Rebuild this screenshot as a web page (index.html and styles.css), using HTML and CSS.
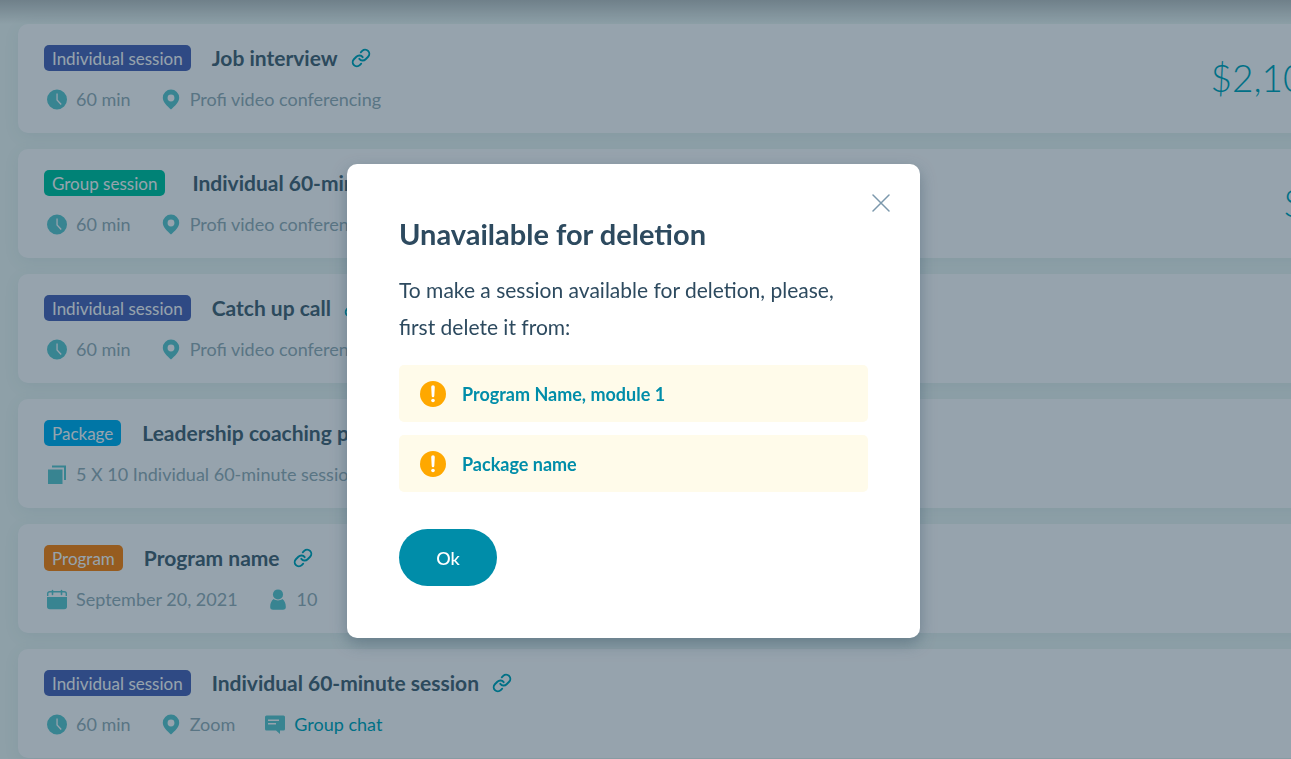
FILE: index.html
```html
<!DOCTYPE html>
<html lang="en">
<head>
    <meta charset="UTF-8">
    <meta name="viewport" content="width=device-width, initial-scale=1.0">
    <title>Services</title>
    <link rel="stylesheet" href="styles.css">
</head>
<body>
    <!-- Icon sprite -->
    <svg class="sprite" width="0" height="0" aria-hidden="true">
        <symbol id="link" viewBox="0 0 24 24">
            <g fill="none" stroke="currentColor" stroke-width="2.3" stroke-linecap="round" stroke-linejoin="round">
                <path d="M10 13a5 5 0 0 0 7.54.54l3-3a5 5 0 0 0-7.07-7.07l-1.72 1.71"/>
                <path d="M14 11a5 5 0 0 0-7.54-.54l-3 3a5 5 0 0 0 7.07 7.07l1.71-1.71"/>
            </g>
        </symbol>
        <symbol id="clock" viewBox="0 0 20 20">
            <path fill="currentColor" fill-rule="evenodd" d="M10 0a10 10 0 1 0 0 20a10 10 0 0 0 0-20zM9.4 4h1.3v6.2l4 4.2-1 1-4.3-4.7z"/>
        </symbol>
        <symbol id="pin" viewBox="0 0 20 22">
            <path fill="currentColor" fill-rule="evenodd" d="M10 .5a8.6 8.6 0 0 0-8.6 8.6c0 4.6 4.6 8.6 8.6 12.4 4-3.8 8.6-7.8 8.6-12.4A8.6 8.6 0 0 0 10 .5zM10 5.8a3.6 3.6 0 1 1 0 7.2a3.6 3.6 0 0 1 0-7.2z"/>
        </symbol>
        <symbol id="stack" viewBox="0 0 20 20">
            <path fill="currentColor" d="M1 5h14.5v14.5H1zM5 1h14v14.5h-2V3H5z"/>
        </symbol>
        <symbol id="calendar" viewBox="0 0 20 20">
            <path fill="currentColor" d="M0 7.5h20v9.5a2.8 2.8 0 0 1-2.800 2.800H2.800A2.800 2.800 0 0 1 0 17z"/>
            <path fill="none" stroke="currentColor" stroke-width="1.400" d="M.7 6.500V4.200a2 2 0 0 1 2-2h14.600a2 2 0 0 1 2 2v2.300"/>
            <path fill="none" stroke="currentColor" stroke-width="1.600" stroke-linecap="round" d="M5.500 1v4M14.500 1v4"/>
        </symbol>
        <symbol id="person" viewBox="0 0 20 22">
            <circle cx="10" cy="5.700" r="5.300" fill="currentColor"/>
            <path fill="currentColor" d="M5.500 10.500c2.600 2 6.400 2 9 0 2.300 1.500 3.700 4.500 3.700 8.300 0 2-1 2.900-3 2.900H4.800c-2 0-3-.9-3-2.900 0-3.800 1.400-6.800 3.700-8.300z"/>
        </symbol>
        <symbol id="chat" viewBox="0 0 20 20">
            <path fill="currentColor" fill-rule="evenodd" d="M1.500 1h17A1.500 1.500 0 0 1 20 2.500v12a1.500 1.500 0 0 1-1.500 1.500H15v3.500L11 16H1.500A1.500 1.500 0 0 1 0 14.500v-12A1.500 1.500 0 0 1 1.500 1zM3 5v1.400h11V5zM3 8.500v1.400h8V8.500z"/>
        </symbol>
        <symbol id="alert" viewBox="0 0 26 26">
            <circle cx="13" cy="13" r="13" fill="#ffa800"/>
            <path fill="#fff" d="M11.200 6a1.800 1.800 0 0 1 3.600 0l-.5 9a1.300 1.300 0 0 1-2.600 0z"/>
            <circle cx="13" cy="19.500" r="1.800" fill="#fff"/>
        </symbol>
    </svg>

    <div class="page">
        <div class="header-shadow"></div>
        <main class="services">
            <article class="card">
                <div class="card-info">
                    <div class="card-title">
                        <span class="badge individual">Individual session</span>
                        <h2>Job interview</h2>
                        <a class="copy-link" href="#" aria-label="Copy link"><svg><use href="#link"/></svg></a>
                    </div>
                    <ul class="meta">
                        <li><svg><use href="#clock"/></svg>60 min</li>
                        <li><svg><use href="#pin"/></svg>Profi video conferencing</li>
                    </ul>
                </div>
                <div class="price">$2,100</div>
            </article>

            <article class="card">
                <div class="card-info">
                    <div class="card-title spaced">
                        <span class="badge group">Group session</span>
                        <h2>Individual 60-minute session</h2>
                        <a class="copy-link" href="#" aria-label="Copy link"><svg><use href="#link"/></svg></a>
                    </div>
                    <ul class="meta">
                        <li><svg><use href="#clock"/></svg>60 min</li>
                        <li><svg><use href="#pin"/></svg>Profi video conferencing</li>
                    </ul>
                </div>
                <div class="price">$5</div>
            </article>

            <article class="card">
                <div class="card-info">
                    <div class="card-title">
                        <span class="badge individual">Individual session</span>
                        <h2>Catch up call</h2>
                        <a class="copy-link" href="#" aria-label="Copy link"><svg><use href="#link"/></svg></a>
                    </div>
                    <ul class="meta">
                        <li><svg><use href="#clock"/></svg>60 min</li>
                        <li><svg><use href="#pin"/></svg>Profi video conferencing</li>
                    </ul>
                </div>
            </article>

            <article class="card">
                <div class="card-info">
                    <div class="card-title">
                        <span class="badge package">Package</span>
                        <h2>Leadership coaching program</h2>
                        <a class="copy-link" href="#" aria-label="Copy link"><svg><use href="#link"/></svg></a>
                    </div>
                    <ul class="meta">
                        <li><svg><use href="#stack"/></svg>5 X 10 Individual 60-minute session</li>
                    </ul>
                </div>
            </article>

            <article class="card">
                <div class="card-info">
                    <div class="card-title">
                        <span class="badge program">Program</span>
                        <h2>Program name</h2>
                        <a class="copy-link" href="#" aria-label="Copy link"><svg><use href="#link"/></svg></a>
                    </div>
                    <ul class="meta">
                        <li><svg><use href="#calendar"/></svg>September 20, 2021</li>
                        <li><svg><use href="#person"/></svg>10</li>
                    </ul>
                </div>
            </article>

            <article class="card">
                <div class="card-info">
                    <div class="card-title">
                        <span class="badge individual">Individual session</span>
                        <h2>Individual 60-minute session</h2>
                        <a class="copy-link" href="#" aria-label="Copy link"><svg><use href="#link"/></svg></a>
                    </div>
                    <ul class="meta">
                        <li><svg><use href="#clock"/></svg>60 min</li>
                        <li><svg><use href="#pin"/></svg>Zoom</li>
                        <li><svg><use href="#chat"/></svg><a href="#">Group chat</a></li>
                    </ul>
                </div>
            </article>
        </main>
    </div>

    <div class="overlay">
        <div class="modal" role="dialog" aria-modal="true" aria-labelledby="modal-title">
            <button class="close" type="button" aria-label="Close">
                <svg viewBox="0 0 18 18"><path d="M1 1l16 16M17 1L1 17"/></svg>
            </button>
            <h1 id="modal-title">Unavailable for deletion</h1>
            <p>To make a session available for deletion, please, first delete it from:</p>
            <div class="notice">
                <svg><use href="#alert"/></svg>
                <a href="#">Program Name, module 1</a>
            </div>
            <div class="notice">
                <svg><use href="#alert"/></svg>
                <a href="#">Package name</a>
            </div>
            <button class="ok" type="button">Ok</button>
        </div>
    </div>
</body>
</html>
```
FILE: styles.css
```css
:root {
    --page-bg: #f1faf6;
    --title: #4c6877;
    --muted: #98b1b9;
    --icon: #60cad0;
    --link: #00a9bd;
    --dark: #2d4a5f;
    --teal: #008da9;
}

* {
    margin: 0;
    padding: 0;
    box-sizing: border-box;
}

body {
    font-family: Lato, "Liberation Sans", sans-serif;
    background: var(--page-bg);
    height: 100vh;
    overflow: hidden;
}

a {
    color: inherit;
    text-decoration: none;
}

.sprite {
    position: absolute;
}

.page {
    height: 100vh;
    overflow: hidden;
}

.header-shadow {
    height: 24px;
    background: linear-gradient(rgba(40, 40, 50, 0.26), rgba(40, 40, 50, 0));
}

/* the list runs past the right edge of the window */
.services {
    display: flex;
    flex-direction: column;
    gap: 16px;
    margin: 0 -61px 0 18px;
}

.card {
    display: flex;
    align-items: center;
    justify-content: space-between;
    padding: 21px 26px 22px;
    background: #fff;
    border-radius: 10px;
    box-shadow: 0 4px 16px rgba(60, 110, 130, 0.08);
}

.card-title {
    display: flex;
    align-items: center;
    height: 26px;
}

.badge {
    height: 26px;
    padding: 0 8px;
    margin-right: 21px;
    border-radius: 5px;
    font-size: 17px;
    line-height: 27px;
    color: #fff;
}

.spaced .badge {
    margin-right: 27px;
}

.individual {
    background: #5169b9;
}

.group {
    background: #00c7a2;
}

.package {
    background: #00b3f3;
}

.program {
    background: #ff8710;
}

h2 {
    font-size: 21px;
    line-height: 26px;
    font-weight: 700;
    color: var(--title);
}

.copy-link {
    height: 20px;
    margin-left: 13px;
    color: var(--link);
}

.copy-link svg {
    width: 20px;
    height: 20px;
}

.meta {
    display: flex;
    gap: 30px;
    margin-top: 17px;
    padding-left: 3px;
    list-style: none;
    font-size: 18px;
    line-height: 23px;
    color: var(--muted);
}

.meta li {
    display: flex;
    align-items: center;
    gap: 9px;
}

.meta svg {
    width: 20px;
    height: 21px;
    color: var(--icon);
}

.meta a {
    color: var(--link);
}

.price {
    font-size: 37px;
    line-height: 44px;
    font-weight: 300;
    color: var(--link);
}

.overlay {
    position: fixed;
    inset: 0;
    display: flex;
    align-items: center;
    justify-content: center;
    padding: 43px 24px 0 0;
    background: rgba(0, 32, 56, 0.41);
}

.modal {
    position: relative;
    width: 573px;
    padding: 52px;
    background: #fff;
    border-radius: 10px;
    box-shadow: 0 6px 16px rgba(45, 74, 95, 0.4);
}

.close {
    position: absolute;
    top: 30px;
    right: 30px;
    width: 18px;
    height: 18px;
    border: none;
    background: none;
    cursor: pointer;
}

.close svg {
    display: block;
    fill: none;
    stroke: #7b98ac;
    stroke-width: 1.5;
    stroke-linecap: round;
}

h1 {
    font-size: 29px;
    line-height: 36px;
    font-weight: 700;
    color: var(--dark);
}

.modal p {
    margin: 19px 0 20px;
    font-size: 21px;
    line-height: 37px;
    color: var(--dark);
}

.notice {
    display: flex;
    align-items: center;
    gap: 16px;
    height: 57px;
    margin-bottom: 13px;
    padding: 0 21px;
    background: #fffbea;
    border-radius: 5px;
    font-size: 18px;
    font-weight: 700;
    color: var(--teal);
}

.notice svg {
    width: 26px;
    height: 26px;
}

.ok {
    display: block;
    width: 98px;
    height: 57px;
    margin-top: 37px;
    border: none;
    border-radius: 29px;
    background: var(--teal);
    color: #fff;
    font-family: inherit;
    font-size: 18px;
    font-weight: 500;
    cursor: pointer;
}
```
